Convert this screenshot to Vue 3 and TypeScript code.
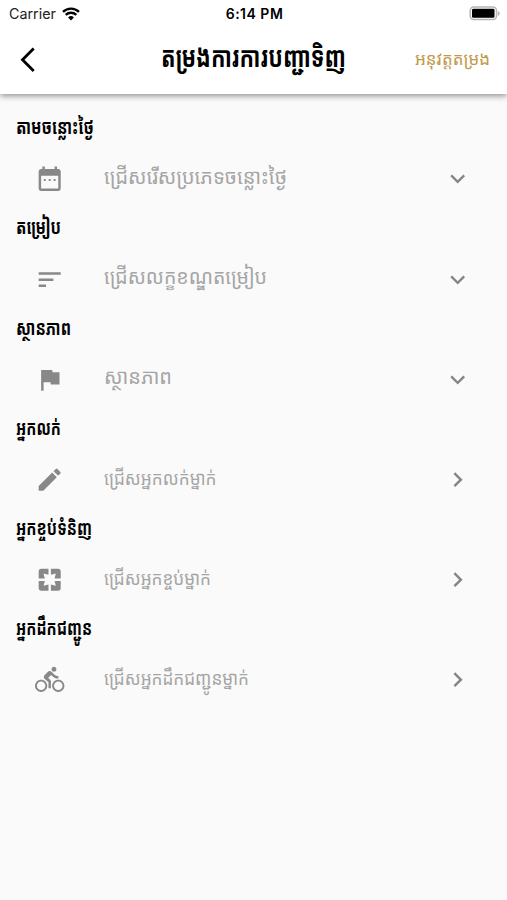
<script setup lang="ts">
interface Field {
  label: string
  hint: string
  icon: string
  open: 'down' | 'right'
  labelWidth: number
  hintWidth: number
  small?: boolean
}

const icons = {
  calendar: 'M19 4h-1V2h-2v2H8V2H6v2H5c-1.100 0-2 .9-2 2v14c0 1.100.9 2 2 2h14c1.100 0 2-.9 2-2V6c0-1.100-.9-2-2-2zm0 16H5V9.500h14V20zM7.200 12.200h1.600v1.600H7.200zm4 0h1.600v1.600h-1.600zm4 0h1.600v1.600h-1.600z',
  sort: 'M3 18h6v-2H3v2zM3 6v2h18V6H3zm0 7h12v-2H3v2z',
  flag: 'M14.400 6L14 4H5v17h2v-7h5.600l.4 2h7V6z',
  pencil: 'M3 17.250V21h3.750L17.810 9.940l-3.750-3.750L3 17.250zM20.710 7.040a1 1 0 0 0 0-1.410l-2.340-2.340a1 1 0 0 0-1.410 0l-1.830 1.830 3.750 3.750 1.830-1.830z',
  pack: 'M3 5v6h5L7 7l4 1V3H5c-1.100 0-2 .9-2 2zm5 8H3v6c0 1.100.9 2 2 2h6v-5l-4 1 1-4zm9 4l-4-1v5h6c1.100 0 2-.9 2-2v-6h-5l1 4zm2-14h-6v5l4-1-1 4h5V5c0-1.100-.9-2-2-2z',
  bike: 'M15.500 5.500c1.100 0 2-.9 2-2s-.9-2-2-2-2 .9-2 2 .9 2 2 2zM5 12c-2.800 0-5 2.200-5 5s2.200 5 5 5 5-2.200 5-5-2.200-5-5-5zm0 8.500c-1.900 0-3.500-1.600-3.500-3.500s1.600-3.500 3.500-3.500 3.500 1.600 3.500 3.500-1.600 3.500-3.500 3.500zm5.800-10l2.400-2.400.8.8c1.300 1.300 3 2.100 5.100 2.100V9c-1.500 0-2.700-.6-3.600-1.500l-1.900-1.900c-.5-.4-1-.6-1.600-.6s-1.100.2-1.400.6L7.800 8.400c-.4.4-.6.9-.6 1.400 0 .6.2 1.100.6 1.400L11 14v5h2v-6.200l-2.200-2.300zM19 12c-2.800 0-5 2.200-5 5s2.200 5 5 5 5-2.200 5-5-2.200-5-5-5zm0 8.500c-1.900 0-3.500-1.600-3.500-3.500s1.600-3.500 3.500-3.500 3.500 1.600 3.500 3.500-1.600 3.500-3.500 3.500z',
}

const fields: Field[] = [
  { label: 'តាមចន្លោះថ្ងៃ', hint: 'ជ្រើសរើសប្រភេទចន្លោះថ្ងៃ', icon: icons.calendar, open: 'down', labelWidth: 78, hintWidth: 183 },
  { label: 'តម្រៀប', hint: 'ជ្រើសលក្ខខណ្ឌតម្រៀប', icon: icons.sort, open: 'down', labelWidth: 45, hintWidth: 163 },
  { label: 'ស្ថានភាព', hint: 'ស្ថានភាព', icon: icons.flag, open: 'down', labelWidth: 55, hintWidth: 68 },
  { label: 'អ្នកលក់', hint: 'ជ្រើសអ្នកលក់ម្នាក់', icon: icons.pencil, open: 'right', labelWidth: 45, hintWidth: 112.5, small: true },
  { label: 'អ្នកខ្ចប់ទំនិញ', hint: 'ជ្រើសអ្នកខ្ចប់ម្នាក់', icon: icons.pack, open: 'right', labelWidth: 76, hintWidth: 107, small: true },
  { label: 'អ្នកដឹកជញ្ជូន', hint: 'ជ្រើសអ្នកដឹកជញ្ជូនម្នាក់', icon: icons.bike, open: 'right', labelWidth: 76, hintWidth: 145, small: true },
]

const chevrons = {
  down: 'M7.410 8.590L12 13.170l4.590-4.580L18 10l-6 6-6-6z',
  right: 'M8.590 16.590L13.170 12 8.590 7.410 10 6l6 6-6 6z',
}
</script>

<template>
  <div class="screen">
    <header class="top">
      <div class="status">
        <div class="carrier">
          <span>Carrier</span>
          <svg class="wifi" viewBox="0 0 18 14">
            <path d="M9 13.500l2.900-3a4.200 4.200 0 0 0-5.800 0z" />
            <path d="M3.700 7.900a7.600 7.600 0 0 1 10.600 0M1 4.900a11.500 11.500 0 0 1 16 0" fill="none" stroke="#000" stroke-width="2.300" />
          </svg>
        </div>
        <div class="clock">6:14 PM</div>
        <svg class="battery" viewBox="0 0 31 15">
          <rect x="1.200" y="1" width="26.300" height="12.600" rx="3.500" fill="#fff" stroke="#b4b4b4" stroke-width="1.500" />
          <rect x="3" y="2.800" width="22.500" height="9" rx="1.400" />
          <path d="M28.800 5v5q2-.8 2-2.500T28.800 5z" fill="#b4b4b4" />
        </svg>
      </div>
      <nav class="bar">
        <svg class="back" viewBox="0 0 16 26"><path d="M13.700 1.500L2.500 12.700l11.200 11.200" /></svg>
        <svg class="title" viewBox="0 0 186 44"><text x="0" y="29" textLength="185" lengthAdjust="spacingAndGlyphs">តម្រងការការបញ្ជាទិញ</text></svg>
        <svg class="reset" viewBox="0 0 76 44"><text x="0" y="26.500" textLength="75" lengthAdjust="spacingAndGlyphs">អនុវត្តតម្រង</text></svg>
      </nav>
    </header>
    <main class="form">
      <section v-for="f in fields" :key="f.label + f.hint" class="field">
        <svg class="label" viewBox="0 0 200 36"><text x="0" y="25" :textLength="f.labelWidth" lengthAdjust="spacingAndGlyphs">{{ f.label }}</text></svg>
        <div class="row">
          <svg class="icon" viewBox="0 0 24 24"><path :d="f.icon" /></svg>
          <svg class="hint" :class="{ small: f.small }" viewBox="0 0 300 44"><text x="0" y="27" :textLength="f.hintWidth" lengthAdjust="spacingAndGlyphs">{{ f.hint }}</text></svg>
          <svg class="chevron" viewBox="0 0 24 24"><path :d="chevrons[f.open]" /></svg>
        </div>
      </section>
    </main>
  </div>
</template>

<style>
body {
  margin: 0;
  background: #fafafa;
}
</style>

<style scoped>
.screen {
  width: 507px;
  height: 900px;
  overflow: hidden;
  background: #fafafa;
  font-family: Inter, "Noto Sans Khmer", "Khmer OS", sans-serif;
}
svg {
  display: block;
  flex: none;
  overflow: visible;
}
svg text {
  font-family: "Noto Sans Khmer", "Khmer OS", "DejaVu Sans", sans-serif;
}
.top {
  height: 94px;
  background: #fff;
  box-shadow: 0 2px 6px rgba(0, 0, 0, 0.42);
}
.status {
  display: grid;
  grid-template-columns: 1fr auto 1fr;
  align-items: center;
  height: 27px;
  padding: 0 7px 0 9px;
  font-size: 14.300px;
}
.carrier {
  display: flex;
  align-items: center;
  gap: 6px;
  color: #222;
}
.wifi {
  width: 18px;
  height: 14px;
}
.clock {
  font-size: 14px;
  font-weight: 600;
  letter-spacing: 0.5px;
}
.battery {
  width: 31px;
  height: 15px;
  justify-self: end;
}
.bar {
  display: flex;
  align-items: center;
  height: 65px;
  padding: 0 16px 0 20px;
}
.back {
  width: 16px;
  height: 26px;
}
.back path {
  fill: none;
  stroke: #000;
  stroke-width: 2.800;
}
.title {
  width: 186px;
  height: 44px;
  margin-left: 125px;
  font-size: 28.500px;
  font-weight: 700;
}
.reset {
  width: 76px;
  height: 44px;
  margin-left: auto;
  font-size: 17.500px;
  fill: #c19a4b;
}
.form {
  padding: 15.300px 0 0 16px;
}
.field {
  height: 100.200px;
}
.label {
  width: 200px;
  height: 36px;
  font-size: 20.500px;
  font-weight: 700;
}
.row {
  display: flex;
  align-items: center;
  height: 67.600px;
  padding: 0 34.700px 0 19px;
}
.icon {
  width: 29.400px;
  height: 29.400px;
  fill: #888;
}
.hint {
  width: 300px;
  height: 44px;
  margin-left: 39.200px;
  font-size: 21px;
  fill: #a5a5a5;
}
.small {
  font-size: 19px;
}
.chevron {
  width: 29.400px;
  height: 29.400px;
  margin-left: auto;
  fill: #858585;
}
</style>
